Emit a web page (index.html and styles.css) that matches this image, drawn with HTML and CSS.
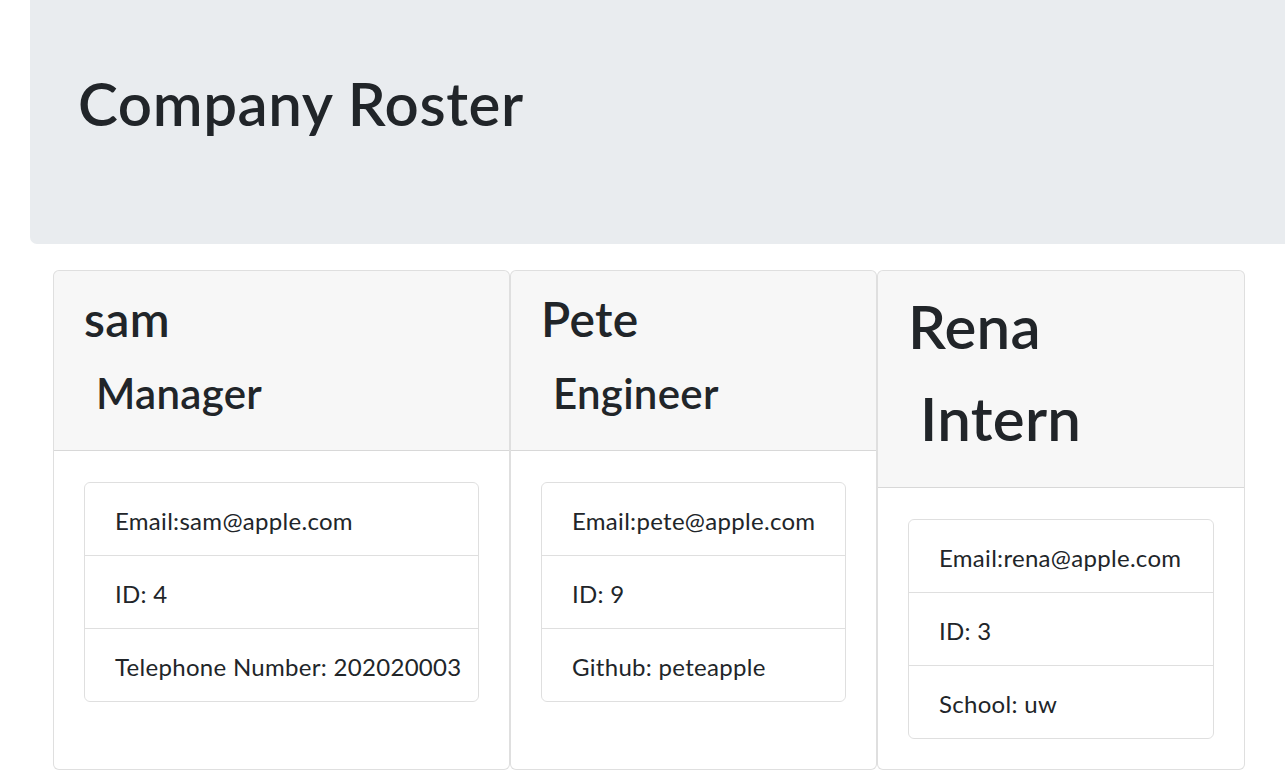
FILE: index.html
```html
<!DOCTYPE html>
<html lang="en">
<head>
<meta charset="utf-8">
<title>Company Roster</title>
<link rel="stylesheet" href="styles.css">
</head>
<body>
  <header class="jumbotron">
    <h1 class="jumbo-title">Company Roster</h1>
  </header>
  <main class="card-row">
    <section class="card card-manager">
      <div class="card-header">
        <h2 class="name name-md">sam</h2>
        <h3 class="role role-md"><span class="role-text">Manager</span></h3>
      </div>
      <div class="card-body">
        <ul class="list-group">
          <li class="list-group-item">Email:sam@apple.com</li>
          <li class="list-group-item">ID: 4</li>
          <li class="list-group-item">Telephone Number: 202020003</li>
        </ul>
      </div>
    </section>
    <section class="card card-engineer">
      <div class="card-header">
        <h2 class="name name-md">Pete</h2>
        <h3 class="role role-md"><span class="role-text">Engineer</span></h3>
      </div>
      <div class="card-body">
        <ul class="list-group">
          <li class="list-group-item">Email:pete@apple.com</li>
          <li class="list-group-item">ID: 9</li>
          <li class="list-group-item">Github: peteapple</li>
        </ul>
      </div>
    </section>
    <section class="card card-intern">
      <div class="card-header">
        <h1 class="name name-lg">Rena</h1>
        <h1 class="role role-lg"><span class="role-text">Intern</span></h1>
      </div>
      <div class="card-body">
        <ul class="list-group">
          <li class="list-group-item">Email:rena@apple.com</li>
          <li class="list-group-item">ID: 3</li>
          <li class="list-group-item">School: uw</li>
        </ul>
      </div>
    </section>
  </main>
</body>
</html>
```

FILE: styles.css
```css
* { box-sizing: border-box; }

html, body {
  margin: 0;
  padding: 0;
  overflow: hidden;
}

body {
  font-family: Lato, "Open Sans", "Liberation Sans", sans-serif;
  font-size: 24px;
  line-height: 36px;
  letter-spacing: 0.3px;
  color: #212529;
  background: #fff;
}

.jumbotron {
  background: #e9ecef;
  margin: -32px -40px 26px 30px;
  padding: 99px 48px 93px;
  border-radius: 7px;
}

.jumbo-title {
  margin: 0 0 12px;
  font-size: 60px;
  line-height: 72px;
  font-weight: 600;
  letter-spacing: 0.6px;
}

.card-row {
  display: flex;
  align-items: stretch;
  margin-left: 53px;
}

.card {
  flex: none;
  display: flex;
  flex-direction: column;
  border: 1px solid rgba(0, 0, 0, 0.125);
  border-radius: 6px;
  background: #fff;
}

.card-manager { width: 457px; }
.card-engineer { width: 367px; }
.card-intern { width: 368px; }

.card-header {
  background: rgba(0, 0, 0, 0.03);
  border-bottom: 1px solid rgba(0, 0, 0, 0.125);
  padding: 19px 30px 17px;
  border-radius: 5px 5px 0 0;
}

.name, .role {
  margin: 0 0 12px;
  font-weight: 600;
}

.name-md { font-size: 48px; line-height: 58px; }
.role-md { font-size: 42px; line-height: 50px; padding: 8px 0 3px; }
.name-lg { font-size: 60px; line-height: 72px; }
.role-lg { font-size: 60px; line-height: 72px; padding: 8px 0 4px; }

.role-text { padding-left: 12px; }

.card-body {
  flex: 1;
  padding: 31px 30px 30px;
}

.list-group {
  list-style: none;
  margin: 0;
  padding: 0;
  border: 1px solid rgba(0, 0, 0, 0.125);
  border-radius: 6px;
}

.list-group-item {
  padding: 20px 30px 16px;
  line-height: 36px;
  white-space: nowrap;
}

.list-group-item + .list-group-item {
  border-top: 1px solid rgba(0, 0, 0, 0.125);
}
```
